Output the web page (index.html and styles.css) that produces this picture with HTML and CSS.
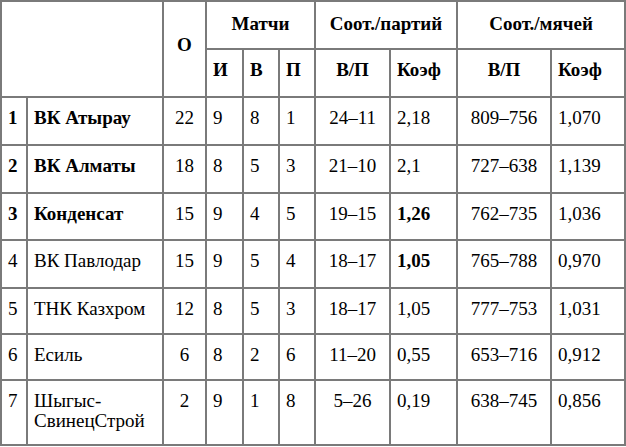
FILE: index.html
```html
<!DOCTYPE html>
<html>
<head>
<meta charset="utf-8">
<title>Таблица</title>
<link rel="stylesheet" href="styles.css">
</head>
<body class="page">
<table class="standings">
  <colgroup>
    <col class="c-pos">
    <col class="c-team">
    <col class="c-pts">
    <col class="c-m">
    <col class="c-m2">
    <col class="c-m2">
    <col class="c-sets">
    <col class="c-setk">
    <col class="c-balls">
    <col class="c-ballk">
  </colgroup>
  <thead>
    <tr class="h-top">
      <th class="cell" colspan="2" rowspan="2"></th>
      <th class="cell pts-head" rowspan="2">О</th>
      <th class="cell center" colspan="3">Матчи</th>
      <th class="cell center" colspan="2">Соот./партий</th>
      <th class="cell center" colspan="2">Соот./мячей</th>
    </tr>
    <tr class="h-sub">
      <th class="cell">И</th>
      <th class="cell">В</th>
      <th class="cell">П</th>
      <th class="cell center">В/П</th>
      <th class="cell">Коэф</th>
      <th class="cell center">В/П</th>
      <th class="cell">Коэф</th>
    </tr>
  </thead>
  <tbody>
    <tr class="r48">
      <td class="cell b">1</td><td class="cell b">ВК Атырау</td><td class="cell center">22</td>
      <td class="cell">9</td><td class="cell">8</td><td class="cell">1</td>
      <td class="cell center">24–11</td><td class="cell">2,18</td><td class="cell center">809–756</td><td class="cell">1,070</td>
    </tr>
    <tr class="r48">
      <td class="cell b">2</td><td class="cell b">ВК Алматы</td><td class="cell center">18</td>
      <td class="cell">8</td><td class="cell">5</td><td class="cell">3</td>
      <td class="cell center">21–10</td><td class="cell">2,1</td><td class="cell center">727–638</td><td class="cell">1,139</td>
    </tr>
    <tr class="r47">
      <td class="cell b">3</td><td class="cell b">Конденсат</td><td class="cell center">15</td>
      <td class="cell">9</td><td class="cell">4</td><td class="cell">5</td>
      <td class="cell center">19–15</td><td class="cell b">1,26</td><td class="cell center">762–735</td><td class="cell">1,036</td>
    </tr>
    <tr class="r48">
      <td class="cell">4</td><td class="cell">ВК Павлодар</td><td class="cell center">15</td>
      <td class="cell">9</td><td class="cell">5</td><td class="cell">4</td>
      <td class="cell center">18–17</td><td class="cell b">1,05</td><td class="cell center">765–788</td><td class="cell">0,970</td>
    </tr>
    <tr class="r46">
      <td class="cell">5</td><td class="cell">ТНК Казхром</td><td class="cell center">12</td>
      <td class="cell">8</td><td class="cell">5</td><td class="cell">3</td>
      <td class="cell center">18–17</td><td class="cell">1,05</td><td class="cell center">777–753</td><td class="cell">1,031</td>
    </tr>
    <tr class="r46">
      <td class="cell">6</td><td class="cell">Есиль</td><td class="cell center">6</td>
      <td class="cell">8</td><td class="cell">2</td><td class="cell">6</td>
      <td class="cell center">11–20</td><td class="cell">0,55</td><td class="cell center">653–716</td><td class="cell">0,912</td>
    </tr>
    <tr class="r65">
      <td class="cell">7</td><td class="cell">Шыгыс-СвинецСтрой</td><td class="cell center">2</td>
      <td class="cell">9</td><td class="cell">1</td><td class="cell">8</td>
      <td class="cell center">5–26</td><td class="cell">0,19</td><td class="cell center">638–745</td><td class="cell">0,856</td>
    </tr>
  </tbody>
</table>
</body>
</html>
```

FILE: styles.css
```css
.page {
  margin: 0;
  background: #ffffff;
  color: #000000;
  font-family: "Liberation Serif", serif;
  font-size: 19px;
}

.standings {
  border-collapse: separate;
  border-spacing: 0;
  border: 1px solid #7a7a7a;
  table-layout: fixed;
  width: 626px;
  font-size: 19px;
  font-family: "Liberation Serif", serif;
}

.c-pos { width: 26px; }
.c-team { width: 136px; }
.c-pts { width: 43px; }
.c-m { width: 37px; }
.c-m2 { width: 36px; }
.c-sets { width: 75px; }
.c-setk { width: 67px; }
.c-balls { width: 94px; }
.c-ballk { width: 74px; }

.standings .cell {
  border: 1px solid #7a7a7a;
  padding: 10px 6px 0 6px;
  vertical-align: top;
  text-align: left;
  line-height: 20px;
  font-weight: normal;
  font-size: 19px;
  font-family: "Liberation Serif", serif;
}

.standings th.cell {
  font-weight: bold;
}

.standings .center {
  text-align: center;
}

.standings .b {
  font-weight: bold;
}

.h-top { height: 48px; }
.standings .h-top .cell { padding-top: 12px; }
.h-sub { height: 48px; }

.standings .h-top .pts-head {
  text-align: center;
  padding-top: 33px;
}

.r48 { height: 48px; }
.r47 { height: 47px; }
.r46 { height: 46px; }
.r65 { height: 65px; }
```
